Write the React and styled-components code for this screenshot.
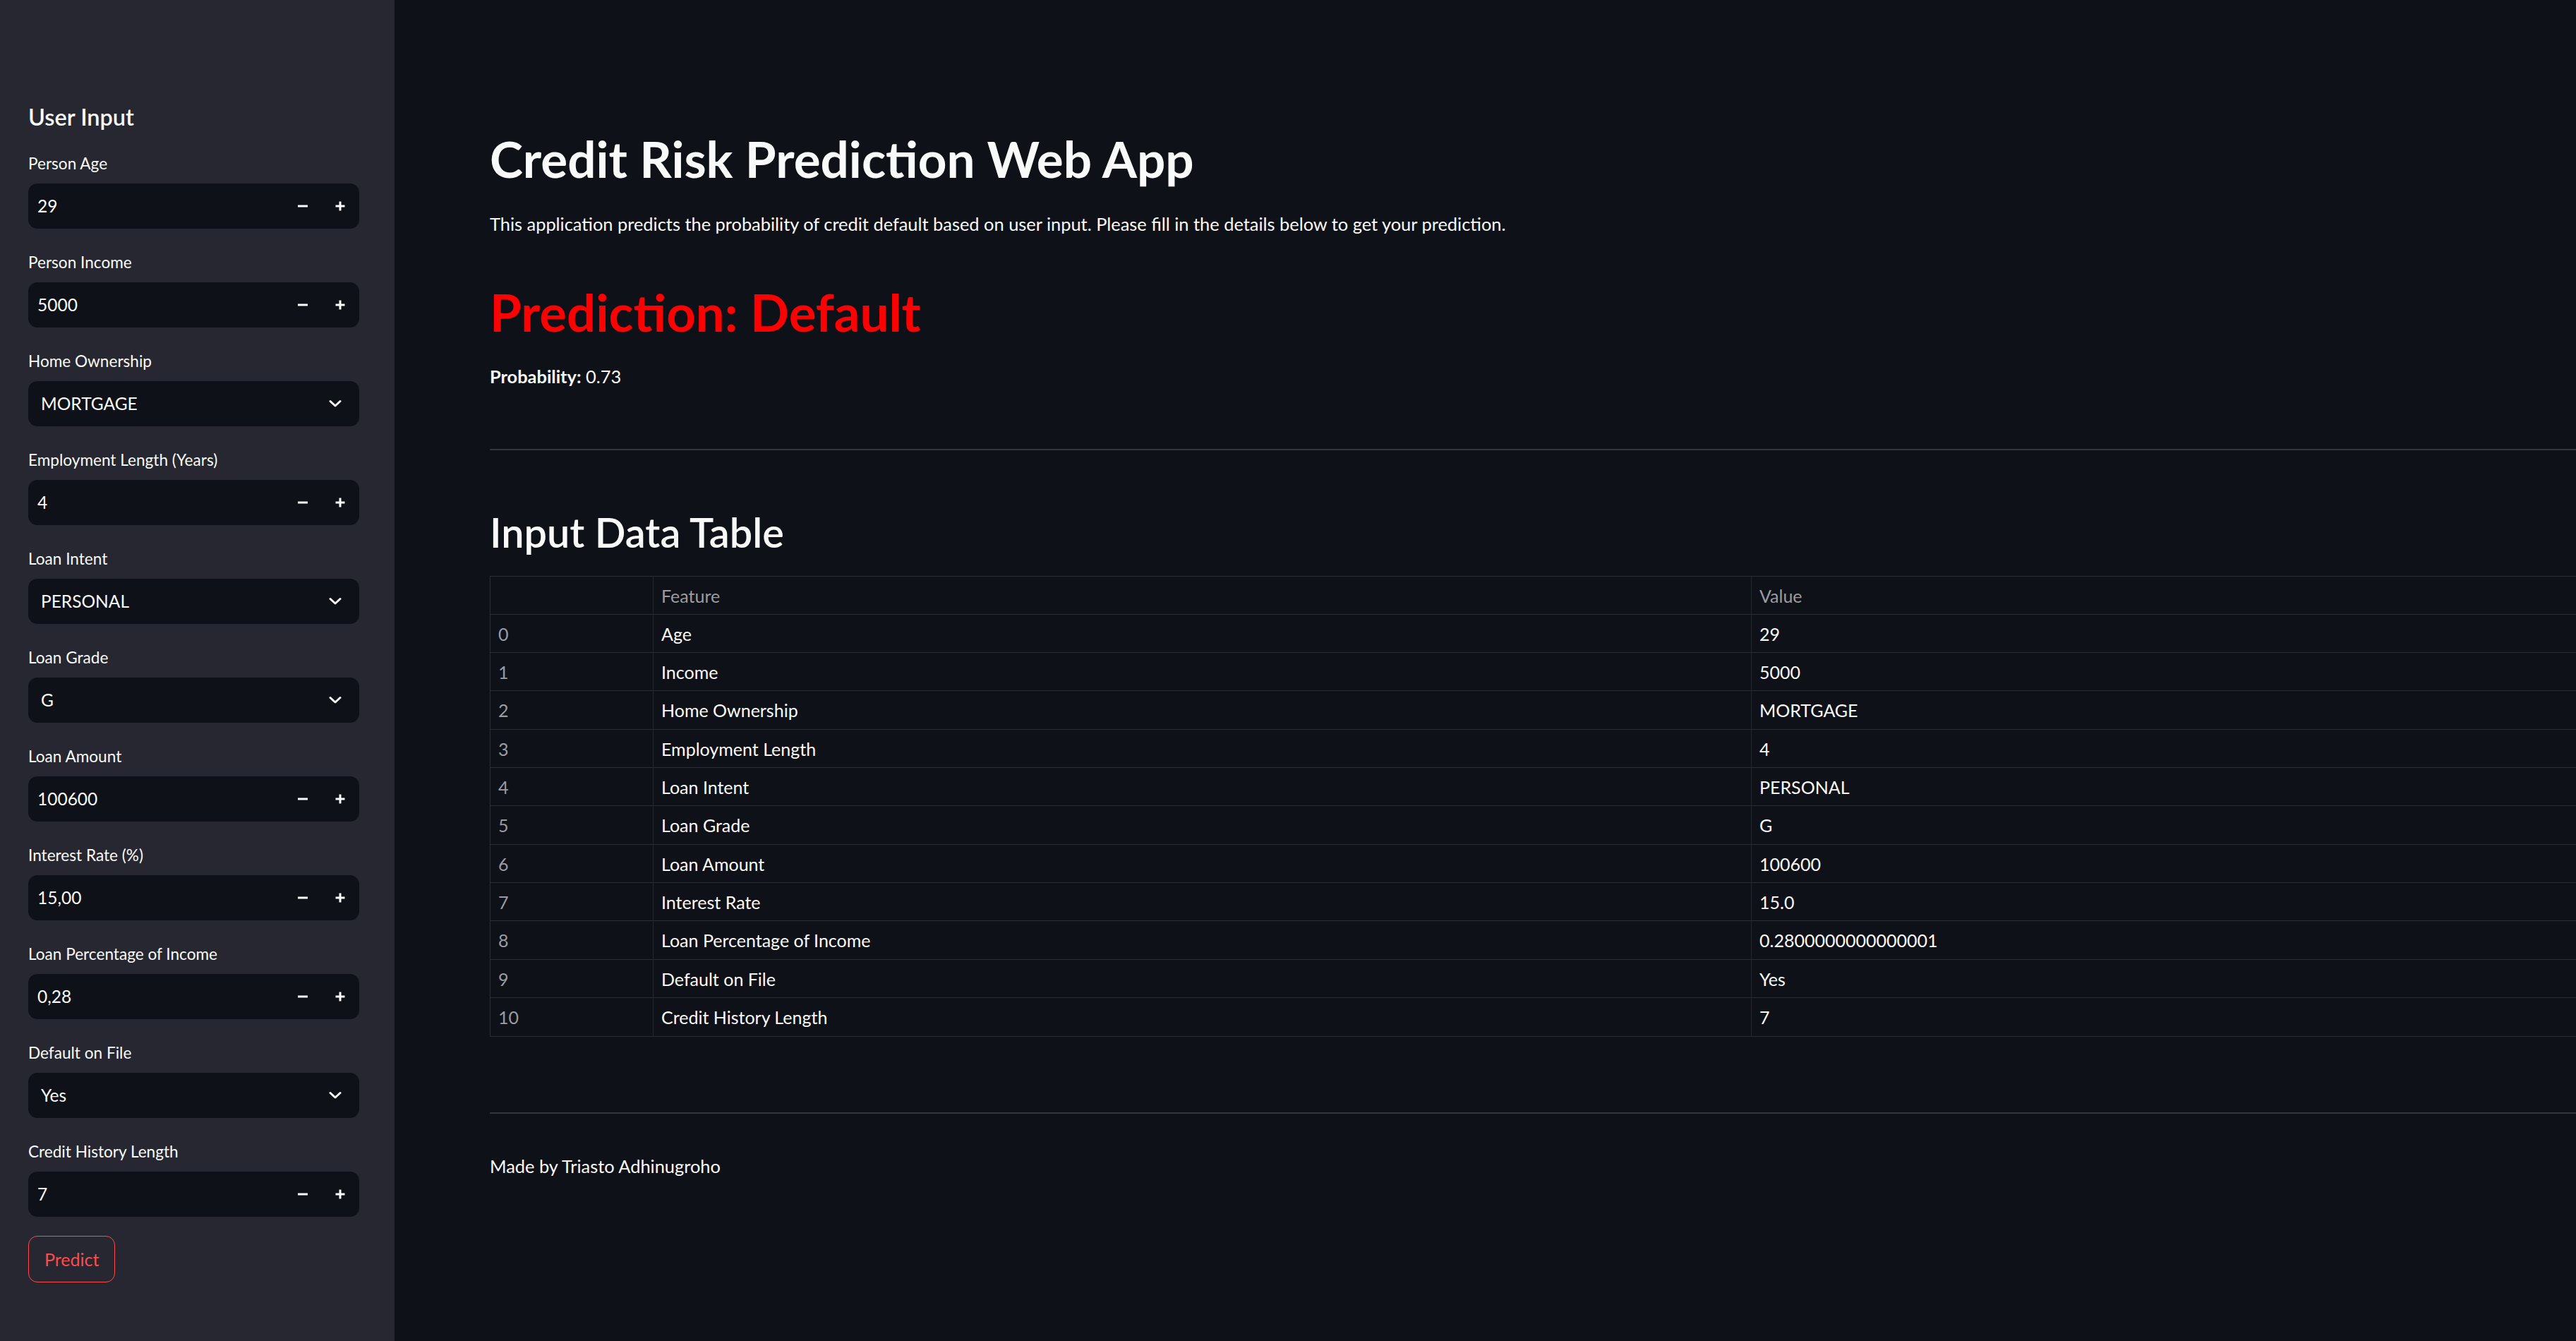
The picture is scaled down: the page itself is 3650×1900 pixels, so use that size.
import React from 'react'
import styled, { createGlobalStyle } from 'styled-components'

const GlobalStyle = createGlobalStyle`
    html, body {
        margin: 0;
        padding: 0;
        background: #0e1117;
        overflow: hidden;
    }
    body {
        font-family: Lato, "Liberation Sans", sans-serif;
        color: #fafafa;
    }
    * {
        box-sizing: border-box;
    }
`

const Page = styled.div`
    display: flex;
    width: 3650px;
    height: 1900px;
    overflow: hidden;
`

const Sidebar = styled.aside`
    width: 559px;
    flex-shrink: 0;
    background: #262730;
    padding: 146px 50px 0 40px;
    display: flex;
    flex-direction: column;
`

const SidebarTitle = styled.h2`
    margin: 0 0 28px 0;
    font-size: 32.5px;
    line-height: 40px;
    font-weight: 600;
    color: #fafafa;
`

const FieldList = styled.div`
    display: flex;
    flex-direction: column;
    gap: 30.5px;
`

const Field = styled.div`
    display: flex;
    flex-direction: column;
`

const Label = styled.label`
    font-size: 22.6px;
    line-height: 36px;
    padding-bottom: 9.5px;
    color: #fafafa;
`

const InputBox = styled.div`
    display: flex;
    align-items: center;
    height: 64px;
    background: #0e1117;
    border-radius: 13px;
    overflow: hidden;
`

const InputText = styled.div`
    flex: 1;
    padding-left: ${p => (p.$select ? 18 : 13)}px;
    font-size: 24.5px;
    color: #fafafa;
`

const StepButton = styled.button`
    width: 53.5px;
    height: 64px;
    border: none;
    background: transparent;
    display: flex;
    align-items: center;
    justify-content: center;
    padding: 0;
    cursor: pointer;
`

const Chevron = styled.div`
    width: 64px;
    height: 64px;
    display: flex;
    align-items: center;
    justify-content: center;
    margin-right: 2px;
`

const PredictButton = styled.button`
    align-self: flex-start;
    margin-top: -3.5px;
    height: 66px;
    padding: 0 22px;
    border: 1px solid #ff4b4b;
    border-radius: 13px;
    background: transparent;
    color: #ff4b4b;
    font-family: Lato, "Liberation Sans", sans-serif;
    font-size: 25px;
`

const Main = styled.main`
    flex: 1;
    overflow: hidden;
    padding: 183px 0 0 135px;
`

const Content = styled.div`
    width: 3344px;
    display: flex;
    flex-direction: column;
`

const Title = styled.h1`
    margin: 0;
    font-size: ${p => p.$size || 71}px;
    line-height: 84px;
    font-weight: 700;
    color: ${p => p.$color || '#fafafa'};
    margin-top: ${p => p.$top || 0}px;
`

const Text = styled.p`
    margin: 0;
    margin-top: ${p => p.$top || 0}px;
    font-size: 25.4px;
    line-height: 40px;
    color: #fafafa;

    strong {
        font-weight: 700;
    }
`

const Divider = styled.hr`
    margin: ${p => p.$top}px 0 0 0;
    border: none;
    height: 2px;
    background: #34363d;
`

const SubTitle = styled.h2`
    margin: 82px 0 0 0;
    font-size: 57.6px;
    line-height: 68px;
    font-weight: 600;
    color: #fafafa;
`

const Table = styled.div`
    margin-top: 27.6px;
    border: 1px solid #2b2d33;
    display: grid;
    grid-template-columns: 230px 1556px 1fr;
`

const Cell = styled.div`
    height: 54.3px;
    line-height: 54.3px;
    padding-left: 11px;
    font-size: 25px;
    color: ${p => (p.$muted ? '#9b9ca3' : '#fafafa')};
    border-bottom: ${p => (p.$last ? 'none' : '1px solid #2b2d33')};
    border-left: ${p => (p.$first ? 'none' : '1px solid #25272d')};
    white-space: nowrap;
`

const Minus = () => (
    <svg width="16" height="16" viewBox="0 0 16 16">
        <line x1="1" y1="8" x2="15" y2="8" stroke="#fafafa" strokeWidth="3" />
    </svg>
)

const Plus = () => (
    <svg width="16" height="16" viewBox="0 0 16 16">
        <line x1="1.5" y1="8" x2="14.5" y2="8" stroke="#fafafa" strokeWidth="3" />
        <line x1="8" y1="1.5" x2="8" y2="14.5" stroke="#fafafa" strokeWidth="3" />
    </svg>
)

const ChevronIcon = () => (
    <svg width="18" height="12" viewBox="0 0 18 12">
        <polyline
            points="2,2.5 9,9 16,2.5"
            fill="none"
            stroke="#fafafa"
            strokeWidth="3"
            strokeLinecap="round"
            strokeLinejoin="round"
        />
    </svg>
)

const fields = [
    { label: 'Person Age', value: '29' },
    { label: 'Person Income', value: '5000' },
    { label: 'Home Ownership', value: 'MORTGAGE', select: true },
    { label: 'Employment Length (Years)', value: '4' },
    { label: 'Loan Intent', value: 'PERSONAL', select: true },
    { label: 'Loan Grade', value: 'G', select: true },
    { label: 'Loan Amount', value: '100600' },
    { label: 'Interest Rate (%)', value: '15,00' },
    { label: 'Loan Percentage of Income', value: '0,28' },
    { label: 'Default on File', value: 'Yes', select: true },
    { label: 'Credit History Length', value: '7' },
]

const rows = [
    ['Age', '29'],
    ['Income', '5000'],
    ['Home Ownership', 'MORTGAGE'],
    ['Employment Length', '4'],
    ['Loan Intent', 'PERSONAL'],
    ['Loan Grade', 'G'],
    ['Loan Amount', '100600'],
    ['Interest Rate', '15.0'],
    ['Loan Percentage of Income', '0.2800000000000001'],
    ['Default on File', 'Yes'],
    ['Credit History Length', '7'],
]

export default function App() {
    return (
        <Page>
            <GlobalStyle />
            <Sidebar>
                <SidebarTitle>User Input</SidebarTitle>
                <FieldList>
                    {fields.map(f => (
                        <Field key={f.label}>
                            <Label>{f.label}</Label>
                            <InputBox>
                                <InputText $select={f.select}>{f.value}</InputText>
                                {f.select ? (
                                    <Chevron>
                                        <ChevronIcon />
                                    </Chevron>
                                ) : (
                                    <>
                                        <StepButton>
                                            <Minus />
                                        </StepButton>
                                        <StepButton>
                                            <Plus />
                                        </StepButton>
                                    </>
                                )}
                            </InputBox>
                        </Field>
                    ))}
                    <PredictButton>Predict</PredictButton>
                </FieldList>
            </Sidebar>
            <Main>
                <Content>
                    <Title>Credit Risk Prediction Web App</Title>
                    <Text $top={30}>
                        This application predicts the probability of credit default based on user
                        input. Please fill in the details below to get your prediction.
                    </Text>
                    <Title $color='#ff0000' $size={72.5} $top={63}>
                        Prediction: Default
                    </Title>
                    <Text $top={29}>
                        <strong>Probability:</strong> 0.73
                    </Text>
                    <Divider $top={83} />
                    <SubTitle>Input Data Table</SubTitle>
                    <Table>
                        <Cell $first />
                        <Cell $muted>Feature</Cell>
                        <Cell $muted>Value</Cell>
                        {rows.map(([feature, value], i) => (
                            <React.Fragment key={feature}>
                                <Cell $first $muted $last={i === rows.length - 1}>
                                    {i}
                                </Cell>
                                <Cell $last={i === rows.length - 1}>{feature}</Cell>
                                <Cell $last={i === rows.length - 1}>{value}</Cell>
                            </React.Fragment>
                        ))}
                    </Table>
                    <Divider $top={107} />
                    <Text $top={54}>Made by Triasto Adhinugroho</Text>
                </Content>
            </Main>
        </Page>
    )
}
